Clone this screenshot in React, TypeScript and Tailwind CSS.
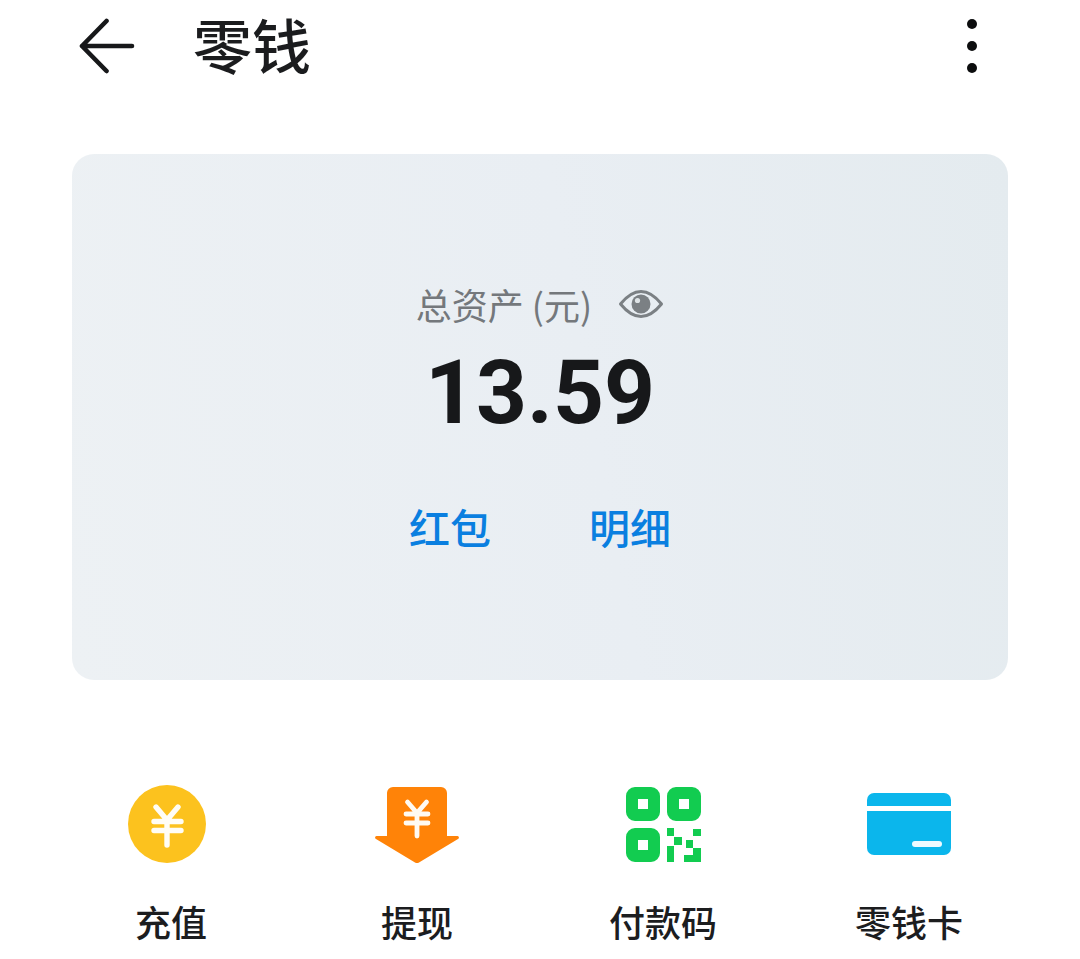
const cjk = "font-['Noto_Sans_CJK_SC','Noto_Sans',sans-serif]";

function Back() {
  return (
    <svg width="56" height="56" viewBox="0 0 56 56" fill="none" stroke="#17181a" strokeWidth="4.6" strokeLinecap="round" strokeLinejoin="round">
      <path d="M27.5 3 L3 28 L27.5 53 M3 28 H53" />
    </svg>
  );
}

function Dots() {
  return (
    <svg width="12" height="56" viewBox="0 0 12 56" fill="#0c0d0e">
      <circle cx="6" cy="6" r="5" />
      <circle cx="6" cy="28" r="5" />
      <circle cx="6" cy="50" r="5" />
    </svg>
  );
}

function Eye() {
  return (
    <svg width="46" height="30" viewBox="0 0 46 30" fill="none">
      <path d="M2.5 15 C9 7 15 2.5 23 2.5 C31 2.5 37 7 43.5 15 C37 23 31 27.5 23 27.5 C15 27.5 9 23 2.5 15 Z" stroke="#7b8084" strokeWidth="3" strokeLinejoin="round" />
      <circle cx="23" cy="15" r="9.5" fill="#7b8084" />
      <circle cx="19.5" cy="11.5" r="2.6" fill="#dfe4e7" />
    </svg>
  );
}

function Coin() {
  return (
    <svg width="84" height="84" viewBox="0 0 84 84" fill="none" className="overflow-visible">
      <circle cx="38" cy="41" r="39" fill="#fcc21e" />
      <path d="M27 24 L38 37 L49 24 M25 38.5 H52 M25 47.5 H52 M38 37 V62" stroke="#fffdf5" strokeWidth="5.4" strokeLinecap="round" strokeLinejoin="round" />
    </svg>
  );
}

function Withdraw() {
  return (
    <svg width="84" height="84" viewBox="0 0 84 84" fill="none">
      <path d="M12 10 a6 6 0 0 1 6 -6 H66 a6 6 0 0 1 6 6 V53 H82 a1.6 1.6 0 0 1 1 3 L44 79.5 a4 4 0 0 1 -4 0 L1 56 a1.6 1.6 0 0 1 1 -3 H12 Z" fill="#ff8308" />
      <path d="M32.5 19 L42 30 L51.5 19 M31 31 H53 M31 40 H53 M42 30 V53" stroke="#fffaf2" strokeWidth="4.8" strokeLinecap="round" strokeLinejoin="round" />
    </svg>
  );
}

function Qr() {
  const green = "#12cc50";
  return (
    <svg width="84" height="84" viewBox="0 0 84 84" fill="none">
      <path fillRule="evenodd" fill={green} d="M14 4 H30 a9 9 0 0 1 9 9 V29 a9 9 0 0 1 -9 9 H14 a9 9 0 0 1 -9 -9 V13 a9 9 0 0 1 9 -9 Z M17 16 V26 H27 V16 Z" />
      <path fillRule="evenodd" fill={green} d="M55 4 H71 a9 9 0 0 1 9 9 V29 a9 9 0 0 1 -9 9 H55 a9 9 0 0 1 -9 -9 V13 a9 9 0 0 1 9 -9 Z M58 16 V26 H68 V16 Z" />
      <path fillRule="evenodd" fill={green} d="M14 45 H30 a9 9 0 0 1 9 9 V70 a9 9 0 0 1 -9 9 H14 a9 9 0 0 1 -9 -9 V54 a9 9 0 0 1 9 -9 Z M17 57 V67 H27 V57 Z" />
      <g fill={green}>
        <rect x="46" y="45" width="7" height="8" />
        <rect x="72" y="46" width="8" height="7" />
        <rect x="53" y="54" width="8" height="8" />
        <rect x="65" y="57" width="7" height="8" />
        <rect x="46" y="63" width="7" height="16" />
        <rect x="72" y="65" width="8" height="14" />
        <rect x="63" y="72" width="9" height="7" />
      </g>
    </svg>
  );
}

function Card() {
  return (
    <svg width="84" height="84" viewBox="0 0 84 84" fill="none">
      <path d="M7 10 H77 a7 7 0 0 1 7 7 V23 H0 V17 a7 7 0 0 1 7 -7 Z" fill="#0bb6ec" />
      <path d="M0 28 H84 V65 a7 7 0 0 1 -7 7 H7 a7 7 0 0 1 -7 -7 Z" fill="#0bb6ec" />
      <rect x="45" y="58" width="30" height="6" rx="3" fill="#eefaff" />
    </svg>
  );
}

const actions = [
  { label: "充值", icon: <Coin /> },
  { label: "提现", icon: <Withdraw /> },
  { label: "付款码", icon: <Qr /> },
  { label: "零钱卡", icon: <Card /> },
];

export default function App() {
  return (
    <div className={`w-[1080px] h-[959px] overflow-hidden bg-white ${cjk}`}>
      <header className="h-[92px] flex items-center pl-[79px] pr-[102px]">
        <Back />
        <h1 className="ml-[58px] pb-[4px] text-[59px] leading-[64px] font-medium text-[#1b1c1e]">零钱</h1>
        <div className="ml-auto flex">
          <Dots />
        </div>
      </header>

      <section className="mx-[72px] mt-[62px] h-[526px] rounded-[22px] bg-[linear-gradient(80deg,#edf1f4_0%,#e9eef3_55%,#e4ebef_100%)] flex flex-col items-center pt-[130px]">
        <div className="h-[40px] flex items-center">
          <span className="text-[36px] leading-[40px] text-[#74787c]">总资产 (元)</span>
          <span className="ml-[26px] flex"><Eye /></span>
        </div>
        <div className="mt-[24px] h-[90px] text-[89px] leading-[90px] font-bold text-[#17181a] font-['Roboto',sans-serif]">13.59</div>
        <div className="mt-[64px] flex gap-[98px] text-[41px] leading-[48px] font-medium text-[#0a7fe0]">
          <span>红包</span>
          <span>明细</span>
        </div>
      </section>

      <section className="mt-[103px] px-[48px] grid grid-cols-4">
        {actions.map((a) => (
          <div key={a.label} className="flex flex-col items-center">
            {a.icon}
            <span className="mt-[30px] text-[36px] leading-[48px] font-medium text-[#1c1d1f]">{a.label}</span>
          </div>
        ))}
      </section>
    </div>
  );
}
